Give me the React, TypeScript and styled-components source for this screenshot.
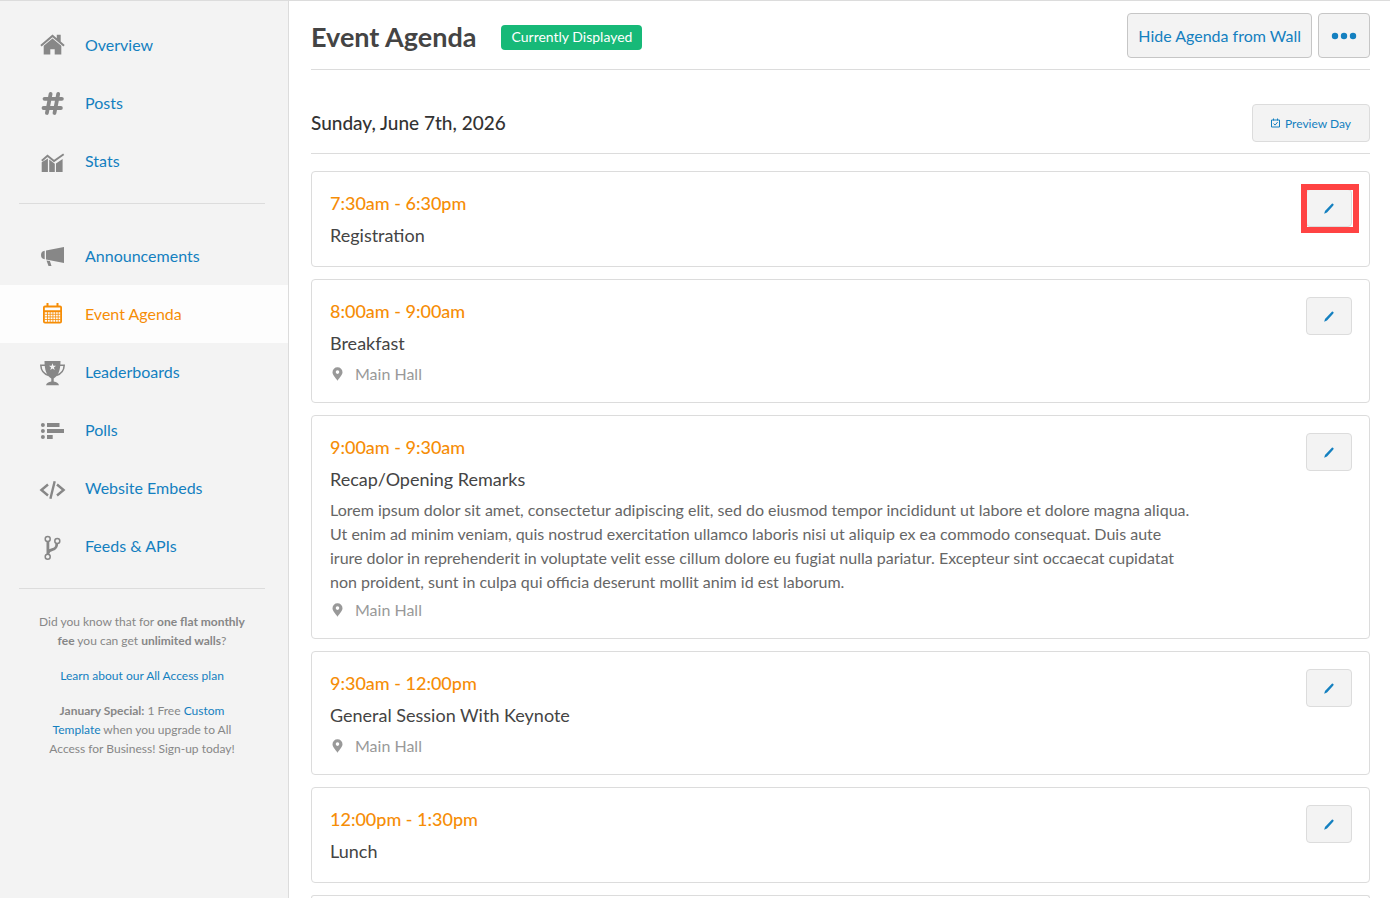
import React from "react";
import styled, { createGlobalStyle } from "styled-components";

const color = {
  blue: "#1480c0",
  orange: "#f68d06",
  red: "#ff4343",
  green: "#17b978",
  line: "#dcdcdc",
  panel: "#f3f3f3",
  icon: "#878787",
};

const GlobalStyle = createGlobalStyle`
  *, *::before, *::after { box-sizing: border-box; }
  body {
    margin: 0;
    background: #fff;
    color: #444;
    font-family: Lato, "Liberation Sans", sans-serif;
    font-size: 16px;
    line-height: 24px;
  }
  a { color: ${color.blue}; text-decoration: none; }
  h1, h2, h3, p, ul { margin: 0; padding: 0; }
  ul { list-style: none; }
`;

const Page = styled.div`
  display: flex;
  min-height: 100vh;
  border-top: 1px solid ${color.line};
`;

const Sidebar = styled.aside`
  flex: 0 0 289px;
  padding-top: 15px;
  background: ${color.panel};
  border-right: 1px solid ${color.line};
`;

const NavLink = styled.a<{ $active?: boolean }>`
  display: flex;
  align-items: center;
  gap: 20px;
  height: 58px;
  padding-left: 40px;
  color: ${(p) => (p.$active ? color.orange : color.blue)};
  background: ${(p) => (p.$active ? "#fdfdfd" : "transparent")};

  svg {
    flex: none;
    overflow: visible;
    color: ${(p) => (p.$active ? color.orange : color.icon)};
  }
`;

const Divider = styled.hr`
  height: 1px;
  margin: 13px 23px 23px 19px;
  border: 0;
  background: ${color.line};
`;

const Promo = styled.div`
  display: flex;
  flex-direction: column;
  gap: 16px;
  padding: 0 40px 24px 36px;
  color: ${color.icon};
  font-size: 12px;
  line-height: 19px;
  text-align: center;
`;

const Main = styled.main`
  flex: 1;
  min-width: 0;
  padding: 12px 20px 0 22px;
`;

const Header = styled.header`
  display: flex;
  align-items: center;
  gap: 25px;
  padding-bottom: 11px;
  border-bottom: 1px solid ${color.line};
`;

const Title = styled.h1`
  padding-top: 2px;
  font-size: 27px;
  line-height: 36px;
  font-weight: 700;
`;

const Badge = styled.span`
  margin-top: 4px;
  padding: 0 10px 2px;
  border-radius: 4px;
  background: ${color.green};
  color: #fff;
  font-size: 14px;
  line-height: 23px;
`;

const Actions = styled.div`
  display: flex;
  gap: 6px;
  margin-left: auto;
`;

const Button = styled.button<{ $size?: "large" | "small" | "icon" }>`
  display: inline-flex;
  align-items: center;
  justify-content: center;
  gap: 5px;
  height: ${(p) => (p.$size === "large" ? 45 : 38)}px;
  min-width: ${(p) => (p.$size === "large" ? 52 : 46)}px;
  padding: 0 ${(p) => (p.$size === "icon" ? 0 : p.$size === "small" ? 18 : 10)}px;
  border: 1px solid ${(p) => (p.$size === "large" ? "#c6c6c6" : color.line)};
  border-radius: 4px;
  background: ${color.panel};
  color: ${color.blue};
  font-family: inherit;
  font-size: ${(p) => (p.$size === "large" ? 16 : 12)}px;
  cursor: pointer;
`;

const DayHeader = styled.div`
  display: flex;
  align-items: center;
  justify-content: space-between;
  margin-bottom: 17px;
  padding: 34px 0 11px;
  border-bottom: 1px solid ${color.line};
`;

const DayTitle = styled.h2`
  color: #333;
  font-size: 19px;
  line-height: 28px;
  font-weight: 500;
`;

const Agenda = styled.ul`
  display: flex;
  flex-direction: column;
  gap: 12px;
`;

const Card = styled.li`
  display: flex;
  justify-content: space-between;
  align-items: flex-start;
  padding: 15px 17px 15px 18px;
  border: 1px solid ${color.line};
  border-radius: 4px;
`;

const Details = styled.div`
  flex: 0 1 85%;
  padding-right: 6px;
`;

const Time = styled.p`
  color: ${color.orange};
  font-size: 18px;
  line-height: 32px;
  font-weight: 500;
`;

const SessionTitle = styled.h3`
  font-size: 18px;
  line-height: 32px;
  font-weight: 400;
`;

const Description = styled.p`
  padding: 3px 0 1px;
  color: #666;
`;

const Location = styled.p`
  display: flex;
  align-items: center;
  gap: 10px;
  padding: 3px 0 1px;
  color: #999;
`;

const EditSlot = styled.div`
  position: relative;
  display: flex;
  padding-top: 2px;
`;

const Highlight = styled.span`
  position: absolute;
  inset: -3px -7px -6px -5px;
  border: 6px solid ${color.red};
  pointer-events: none;
`;

const NavIcon = ({ children }: { children: React.ReactNode }) => (
  <svg width="25" height="26" viewBox="0 0 25 26" fill="currentColor" aria-hidden="true">
    {children}
  </svg>
);

const HomeIcon = () => (
  <NavIcon>
    <path d="M12.500 2.600 16.800 6.200V2.800h3.900v6.700l4 3.400-1.300 1.600L12.500 5.300 1.600 14.500.300 12.900z" />
    <path d="M12.500 6.500 21.300 13.800V22.600h-6.600v-5.400h-4.400v5.400H3.700v-8.800z" />
  </NavIcon>
);

const HashIcon = () => (
  <NavIcon>
    <path
      d="M10.600 3.800 6.900 23M18.200 3.800 14.500 23M4.500 8.800h17.400M3.500 18h17.400"
      fill="none"
      stroke="currentColor"
      strokeWidth="3.800"
      strokeLinecap="round"
    />
  </NavIcon>
);

const StatsIcon = () => (
  <NavIcon>
    <path d="M1.700 14.200 7.900 10.500V24H1.700zM9.200 11.500 14.800 15.800V24H9.200zM16 15.600 22.600 11V24H16z" />
    <path d="M1.800 12.800 7.500 7.800 14 13 23.700 6.200" fill="none" stroke="currentColor" strokeWidth="1.900" />
  </NavIcon>
);

const MegaphoneIcon = () => (
  <NavIcon>
    <path d="M24 4v16L6 16.500v-9zM4.700 7.700v8.600C2.200 16 1 14.400 1 12s1.200-4 3.700-4.300zM6.500 17.500l3.400.6 1.600 4.900H8.500z" />
  </NavIcon>
);

const CalendarIcon = () => (
  <NavIcon>
    <path
      fillRule="evenodd"
      d="M6.500 2h2v2.600h8V2h2v2.600h1.500a2 2 0 0 1 2 2v14a2 2 0 0 1-2 2H5a2 2 0 0 1-2-2v-14a2 2 0 0 1 2-2h1.500zM4.800 6.600v2.600h15.400V6.600zM4.800 11.300v9.400h15.400v-9.400z"
    />
    <path
      d="M7.500 11v10M10.200 11v10M12.900 11v10M15.600 11v10M18.200 11v10M4.500 13.300h16M4.500 15.900h16M4.500 18.500h16"
      stroke="currentColor"
      strokeWidth="0.800"
    />
  </NavIcon>
);

const TrophyIcon = () => (
  <NavIcon>
    <path
      fillRule="evenodd"
      d="M4.500 2h16c0 9-2 14.500-6.800 17.500v3c2.800.5 4.800 1.400 5.300 3.700H6c.5-2.300 2.500-3.200 5.300-3.700v-3C6.500 16.500 4.500 11 4.500 2zM12.500 4.300l-.9 2.500H9l2.100 1.600-.8 2.600 2.200-1.500 2.200 1.500-.8-2.600L16 6.800h-2.600z"
    />
    <path
      d="M5 6.200H.8c.2 5 2.700 8.800 8 10.200M20 6.200h4.200c-.2 5-2.700 8.800-8 10.200"
      fill="none"
      stroke="currentColor"
      strokeWidth="1.500"
    />
  </NavIcon>
);

const PollsIcon = () => (
  <NavIcon>
    <circle cx="2.900" cy="8" r="2" />
    <circle cx="2.900" cy="14" r="2" />
    <circle cx="2.900" cy="20" r="2" />
    <path d="M7 6h12.500v4H7zM7 12h17v4H7zM7 18h5.700v4H7z" />
  </NavIcon>
);

const CodeIcon = () => (
  <NavIcon>
    <path
      d="M8 9.500 1.400 15 8 20.500M17 9.500l6.600 5.500-6.600 5.500M14.700 6.200 10.400 23.800"
      fill="none"
      stroke="currentColor"
      strokeWidth="2.400"
    />
  </NavIcon>
);

const BranchIcon = () => (
  <NavIcon>
    <g fill="none" stroke="currentColor">
      <g strokeWidth="1.500">
        <circle cx="7.700" cy="6" r="2.500" />
        <circle cx="17.300" cy="8" r="2.500" />
        <circle cx="7.700" cy="23.700" r="2.500" />
      </g>
      <path d="M7.900 8.500v12.700M16.800 10.500c0 4.500-1.800 5.500-4.600 6.200-2.500.6-4 1.500-4.300 4" strokeWidth="2.800" />
    </g>
  </NavIcon>
);

const PencilIcon = () => (
  <svg width="10" height="11" viewBox="0 0 10 11" fill="currentColor" aria-hidden="true">
    <path d="M8.100.600c.5-.4 1.900.7 1.500 1.300L8.900 3 3 9.400.200 10.700 1 8z" />
  </svg>
);

const DotsIcon = () => (
  <svg width="26" height="8" viewBox="0 0 26 8" fill="currentColor" aria-hidden="true">
    <circle cx="4" cy="4" r="3.200" />
    <circle cx="13" cy="4" r="3.200" />
    <circle cx="22" cy="4" r="3.200" />
  </svg>
);

const CalendarCheckIcon = () => (
  <svg width="9" height="10" viewBox="0 0 9 10" fill="none" stroke="currentColor" aria-hidden="true">
    <path d="M.5 2h8v7h-8zM2.500.5v2M6.500.5v2M2.600 5.500l1.500 1.600 2.500-3" />
  </svg>
);

const PinIcon = () => (
  <svg width="15" height="14" viewBox="0 0 15 14" fill="currentColor" aria-hidden="true">
    <path
      fillRule="evenodd"
      d="M7.500.3a4.900 4.900 0 0 1 5 4.900c0 2.500-2.400 4.600-5 8.500-2.600-3.900-5-6-5-8.500a4.900 4.900 0 0 1 5-4.900zm0 3a1.800 1.800 0 1 0 0 3.600 1.800 1.800 0 0 0 0-3.600z"
    />
  </svg>
);

type NavEntry = { label: string; icon: React.ComponentType; active?: boolean };

const wallNav: NavEntry[] = [
  { label: "Overview", icon: HomeIcon },
  { label: "Posts", icon: HashIcon },
  { label: "Stats", icon: StatsIcon },
];

const featureNav: NavEntry[] = [
  { label: "Announcements", icon: MegaphoneIcon },
  { label: "Event Agenda", icon: CalendarIcon, active: true },
  { label: "Leaderboards", icon: TrophyIcon },
  { label: "Polls", icon: PollsIcon },
  { label: "Website Embeds", icon: CodeIcon },
  { label: "Feeds & APIs", icon: BranchIcon },
];

type Session = {
  time: string;
  title: string;
  description?: string;
  location?: string;
  highlighted?: boolean;
};

const sessions: Session[] = [
  { time: "7:30am - 6:30pm", title: "Registration", highlighted: true },
  { time: "8:00am - 9:00am", title: "Breakfast", location: "Main Hall" },
  {
    time: "9:00am - 9:30am",
    title: "Recap/Opening Remarks",
    description:
      "Lorem ipsum dolor sit amet, consectetur adipiscing elit, sed do eiusmod tempor incididunt ut labore et dolore magna aliqua. Ut enim ad minim veniam, quis nostrud exercitation ullamco laboris nisi ut aliquip ex ea commodo consequat. Duis aute irure dolor in reprehenderit in voluptate velit esse cillum dolore eu fugiat nulla pariatur. Excepteur sint occaecat cupidatat non proident, sunt in culpa qui officia deserunt mollit anim id est laborum.",
    location: "Main Hall",
  },
  { time: "9:30am - 12:00pm", title: "General Session With Keynote", location: "Main Hall" },
  { time: "12:00pm - 1:30pm", title: "Lunch" },
];

const NavList = ({ entries }: { entries: NavEntry[] }) => (
  <ul>
    {entries.map(({ label, icon: Icon, active }) => (
      <li key={label}>
        <NavLink href="#" $active={active} aria-current={active ? "page" : undefined}>
          <Icon />
          {label}
        </NavLink>
      </li>
    ))}
  </ul>
);

const NextCard = styled.div`
  height: 3px;
  margin-top: 12px;
  border: 1px solid ${color.line};
  border-bottom: 0;
  border-radius: 4px 4px 0 0;
`;

export default function App() {
  return (
    <>
      <GlobalStyle />
      <Page>
        <Sidebar>
          <nav aria-label="Wall">
            <NavList entries={wallNav} />
            <Divider />
            <NavList entries={featureNav} />
          </nav>
          <Divider />
          <Promo>
            <p>
              Did you know that for <b>one flat monthly fee</b> you can get <b>unlimited walls</b>?
            </p>
            <p>
              <a href="#">Learn about our All Access plan</a>
            </p>
            <p>
              <b>January Special:</b> 1 Free <a href="#">Custom Template</a> when you upgrade to All Access for
              Business! Sign-up today!
            </p>
          </Promo>
        </Sidebar>
        <Main>
          <Header>
            <Title>Event Agenda</Title>
            <Badge>Currently Displayed</Badge>
            <Actions>
              <Button type="button" $size="large">
                Hide Agenda from Wall
              </Button>
              <Button type="button" $size="large" aria-label="More actions">
                <DotsIcon />
              </Button>
            </Actions>
          </Header>
          <DayHeader>
            <DayTitle>Sunday, June 7th, 2026</DayTitle>
            <Button type="button" $size="small">
              <CalendarCheckIcon />
              Preview Day
            </Button>
          </DayHeader>
          <Agenda>
            {sessions.map((s) => (
              <Card key={s.time}>
                <Details>
                  <Time>{s.time}</Time>
                  <SessionTitle>{s.title}</SessionTitle>
                  {s.description && <Description>{s.description}</Description>}
                  {s.location && (
                    <Location>
                      <PinIcon />
                      {s.location}
                    </Location>
                  )}
                </Details>
                <EditSlot>
                  <Button type="button" $size="icon" aria-label={`Edit ${s.title}`}>
                    <PencilIcon />
                  </Button>
                  {s.highlighted && <Highlight />}
                </EditSlot>
              </Card>
            ))}
          </Agenda>
          <NextCard />
        </Main>
      </Page>
    </>
  );
}
